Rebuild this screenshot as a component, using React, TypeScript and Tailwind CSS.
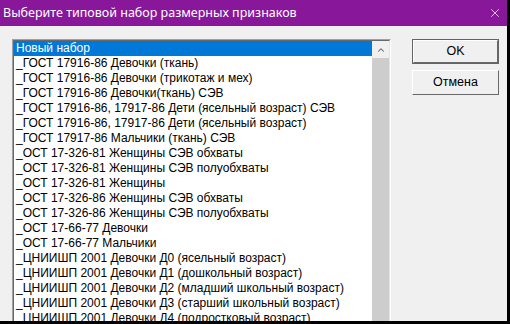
import { X, ChevronUp } from 'lucide-react';

const items = [
  'Новый набор',
  '_ГОСТ 17916-86 Девочки (ткань)',
  '_ГОСТ 17916-86 Девочки (трикотаж и мех)',
  '_ГОСТ 17916-86 Девочки(ткань) СЭВ',
  '_ГОСТ 17916-86, 17917-86 Дети (ясельный возраст) СЭВ',
  '_ГОСТ 17916-86, 17917-86 Дети (ясельный возраст)',
  '_ГОСТ 17917-86 Мальчики (ткань) СЭВ',
  '_ОСТ 17-326-81 Женщины СЭВ обхваты',
  '_ОСТ 17-326-81 Женщины СЭВ полуобхваты',
  '_ОСТ 17-326-81 Женщины',
  '_ОСТ 17-326-86 Женщины СЭВ обхваты',
  '_ОСТ 17-326-86 Женщины СЭВ полуобхваты',
  '_ОСТ 17-66-77 Девочки',
  '_ОСТ 17-66-77 Мальчики',
  '_ЦНИИШП 2001 Девочки Д0 (ясельный возраст)',
  '_ЦНИИШП 2001 Девочки Д1 (дошкольный возраст)',
  '_ЦНИИШП 2001 Девочки Д2 (младший школьный возраст)',
  '_ЦНИИШП 2001 Девочки Д3 (старший школьный возраст)',
  '_ЦНИИШП 2001 Девочки Д4 (подростковый возраст)',
];

function DialogButton({ label, isDefault }: { label: string; isDefault?: boolean }) {
  return (
    <div
      className={
        isDefault
          ? 'w-[87px] h-[25px] border border-[#646464]'
          : 'w-[87px] h-[25px]'
      }
    >
      <div className="w-full h-full border-t border-l border-t-white border-l-white border-b border-r border-b-[#696969] border-r-[#696969] bg-[#f0f0f0] flex items-center justify-center text-[12.5px] text-black">
        {label}
      </div>
    </div>
  );
}

export default function App() {
  return (
    <div
      className="w-[510px] h-[324px] bg-black overflow-hidden"
      style={{ fontFamily: '"Liberation Sans", Arial, sans-serif' }}
    >
      <div className="w-[507px] h-[321px] bg-[#f0f0f0] overflow-hidden flex flex-col">
        {/* Title bar */}
        <div className="h-[26px] shrink-0 bg-[#88179a] flex items-center justify-between pl-[3px] pr-[5px]">
          <span className="text-white text-[12.5px]" style={{ fontFamily: '"Noto Sans", sans-serif' }}>
            Выберите типовой набор размерных признаков
          </span>
          <X size={14} strokeWidth={1.25} className="text-white" />
        </div>

        {/* Body */}
        <div className="flex pt-[13px] pl-[12px] gap-[21px]">
          {/* Listbox */}
          <div className="w-[379px] h-[290px] shrink-0 border-t border-l border-t-[#a0a0a0] border-l-[#a0a0a0] border-b border-r border-b-white border-r-white">
            <div className="w-full h-full flex border-t border-l border-t-[#696969] border-l-[#696969] border-b border-r border-b-[#e3e3e3] border-r-[#e3e3e3]">
              <div className="flex-1 bg-white overflow-hidden">
                {items.map((item, i) => (
                  <div
                    key={item}
                    className={
                      i === 0
                        ? 'h-[15px] leading-[15px] pl-[2px] text-[12px] whitespace-nowrap bg-[#0078d7] text-white'
                        : 'h-[15px] leading-[15px] pl-[2px] text-[12px] whitespace-nowrap text-black'
                    }
                  >
                    {item}
                  </div>
                ))}
              </div>
              {/* Scrollbar */}
              <div className="w-[17px] shrink-0 flex flex-col bg-[#f0f0f0]">
                <div className="h-[17px] shrink-0 flex items-center justify-center">
                  <ChevronUp size={10} strokeWidth={2.5} className="text-[#606060]" />
                </div>
                <div className="flex-1 bg-[#cdcdcd]" />
              </div>
            </div>
          </div>

          {/* Buttons */}
          <div className="flex flex-col gap-[6px]">
            <DialogButton label="OK" isDefault />
            <DialogButton label="Отмена" />
          </div>
        </div>
      </div>
    </div>
  );
}
